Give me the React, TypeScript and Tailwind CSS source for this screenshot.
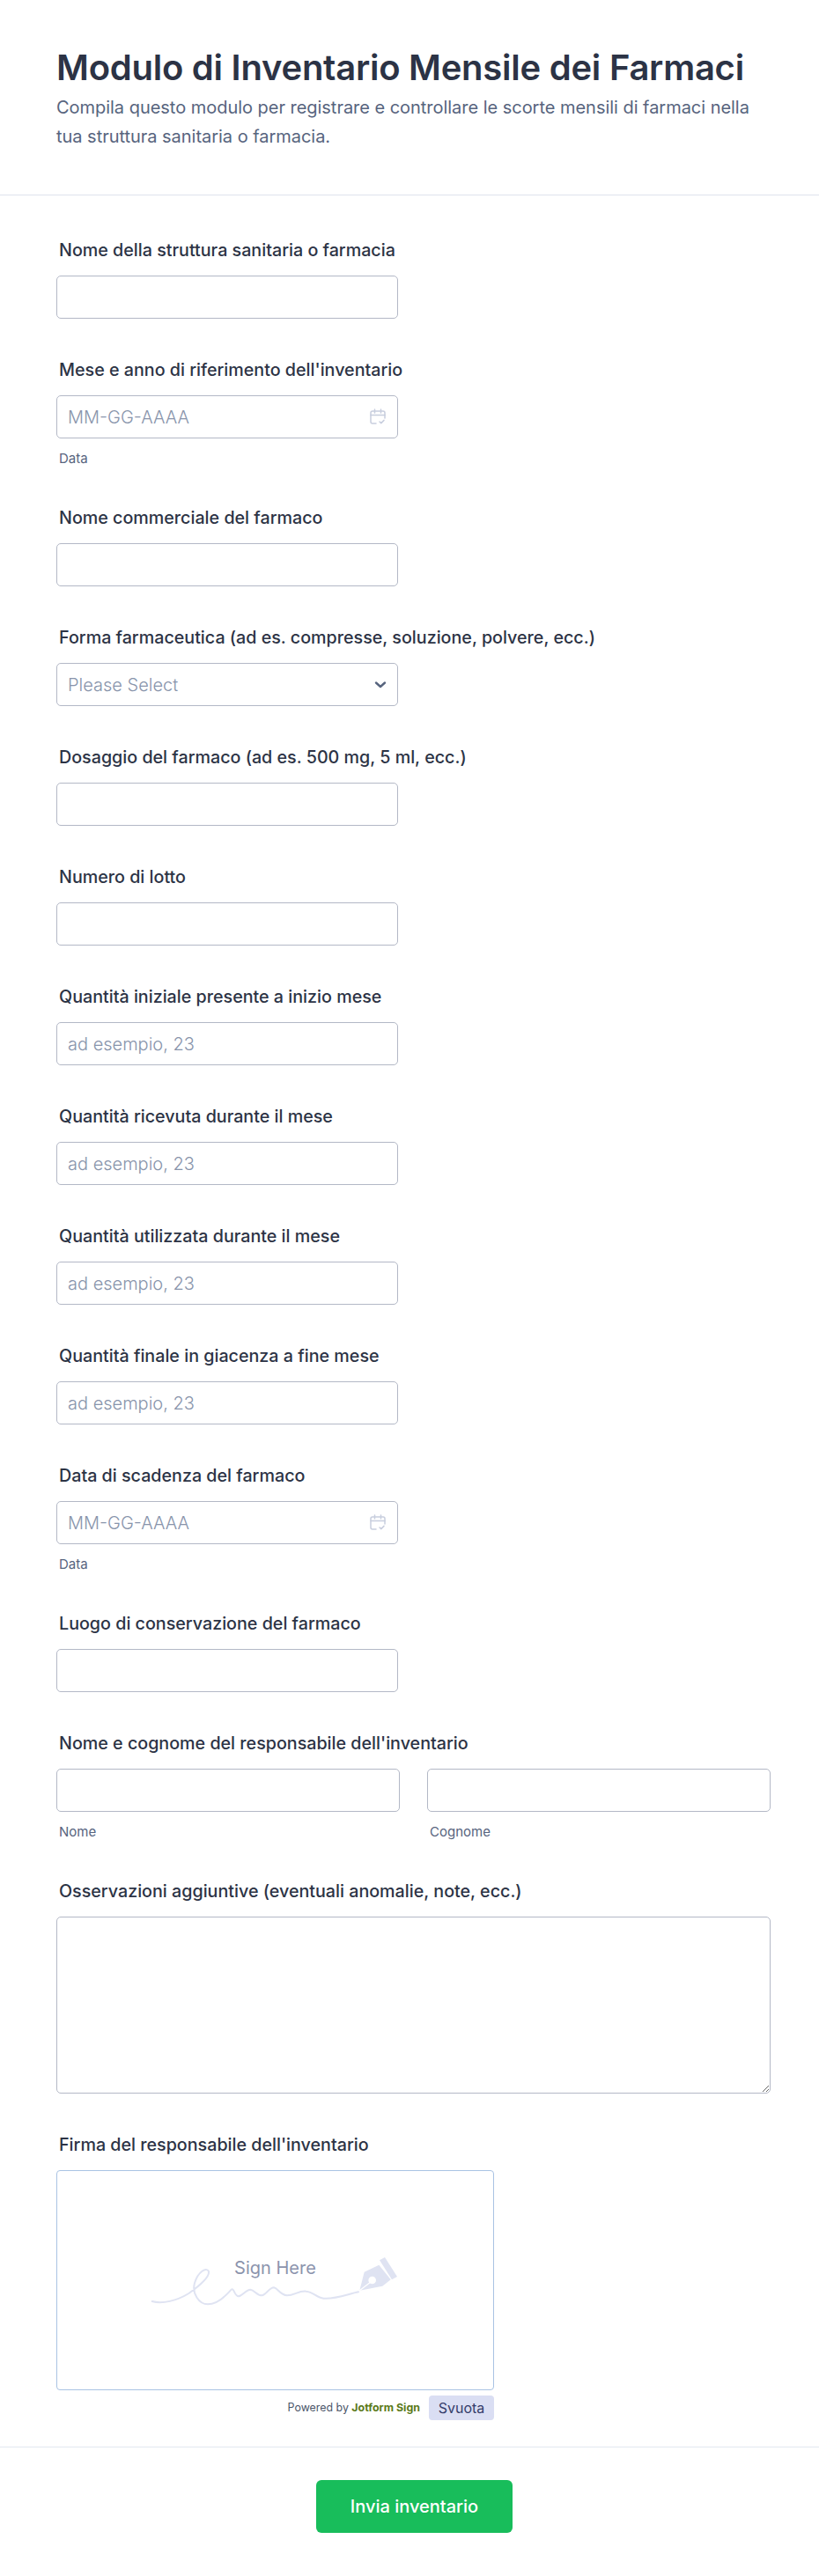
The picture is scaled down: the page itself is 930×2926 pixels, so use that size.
import React from 'react';

const inputClass =
  'block w-full h-[49px] px-3 bg-white border border-[#b3b8c6] rounded-[5px] text-[20px] font-light text-[#2c3345] placeholder:text-[#8894ab] outline-none';
const labelClass = 'block px-[3px] mb-[17px] text-[19.7px] leading-[24px] whitespace-nowrap font-[450] text-[#2c3345]';
const subLabelClass = 'block px-[3px] mt-[14px] text-[15px] leading-[18px] text-[#57647e]';

const Label: React.FC<{ children: React.ReactNode }> = ({ children }) => (
  <label className={labelClass}>{children}</label>
);

const TextField = ({ label, placeholder }: { label: string; placeholder?: string }) => (
  <div className="w-[388px]">
    <Label>{label}</Label>
    <input type="text" placeholder={placeholder} className={inputClass} />
  </div>
);

const CalendarIcon = () => (
  <svg width="18" height="18" viewBox="0 0 18 18" fill="none" stroke="#c8cede" strokeWidth="1.5" strokeLinecap="round" strokeLinejoin="round">
    <path d="M7 17H3A2 2 0 0 1 1 15V5A2 2 0 0 1 3 3h12A2 2 0 0 1 17 5V11" />
    <path d="M1 7.5h16M5.5 1v4M12.5 1v4" />
    <path d="M11 15l1.8 1.6L16 13.4" />
  </svg>
);

const DateField = ({ label }: { label: string }) => (
  <div className="w-[388px]">
    <Label>{label}</Label>
    <div className="relative">
      <input type="text" placeholder="MM-GG-AAAA" className={inputClass} />
      <span className="absolute right-[14px] top-[15px]">
        <CalendarIcon />
      </span>
    </div>
    <span className={subLabelClass}>Data</span>
  </div>
);

const SelectField = ({ label }: { label: string }) => (
  <div className="w-[388px]">
    <Label>{label}</Label>
    <div className="relative">
      <select className={`${inputClass} appearance-none text-[#8894ab]`} defaultValue="">
        <option value="">Please Select</option>
      </select>
      <svg className="absolute right-[13px] top-[20px]" width="14" height="10" viewBox="0 0 14 10" fill="none" stroke="#57647e" strokeWidth="2.4" strokeLinecap="round" strokeLinejoin="round">
        <path d="M2 2.5l5 4.5 5-4.5" />
      </svg>
    </div>
  </div>
);

// signature scribble + pen nib, coordinates taken at 3x
const SignatureArt = () => (
  <svg className="absolute left-[86px] top-[64px]" width="320" height="130" viewBox="0 0 960 390" fill="none">
    <path
      d="M65 252C100 262 150 250 190 225C225 200 262 170 258 150C250 135 222 150 210 190C200 225 225 262 255 262C285 262 315 235 335 212C345 205 345 235 360 235C375 232 385 212 400 212C415 214 420 232 440 232C455 228 465 205 480 205C495 208 500 230 525 232C550 232 565 215 590 218C615 220 625 240 650 242C690 245 730 228 768 220"
      stroke="#dfe3f2"
      strokeWidth="6"
      strokeLinecap="round"
    />
    <path d="M772 215L788 152L838 128L878 178L850 200Z" fill="#dfe3f2" />
    <path d="M840 112L858 102L900 168L882 178Z" fill="#dfe3f2" />
    <circle cx="815" cy="180" r="13" fill="#fff" />
    <path d="M772 215L810 186" stroke="#fff" strokeWidth="4" />
  </svg>
);

export default function App() {
  return (
    <div className="w-[930px] min-h-[2926px] bg-white font-['Inter',sans-serif]">
      <header className="h-[222px] px-16 pt-[51px] border-b border-[#dfe3ec]">
        <h1 className="text-[40px] leading-[52px] font-semibold tracking-[-0.25px] text-[#2c3345]">Modulo di Inventario Mensile dei Farmaci</h1>
        <p className="mt-[3px] text-[20px] leading-[33px] tracking-[-0.03px] text-[#57647e]">
          Compila questo modulo per registrare e controllare le scorte mensili di farmaci nella tua struttura sanitaria o farmacia.
        </p>
      </header>

      <form className="flex flex-col gap-[46px] px-16 pt-[50px]">
        <TextField label="Nome della struttura sanitaria o farmacia" />
        <DateField label="Mese e anno di riferimento dell'inventario" />
        <TextField label="Nome commerciale del farmaco" />
        <SelectField label="Forma farmaceutica (ad es. compresse, soluzione, polvere, ecc.)" />
        <TextField label="Dosaggio del farmaco (ad es. 500 mg, 5 ml, ecc.)" />
        <TextField label="Numero di lotto" />
        <TextField label="Quantità iniziale presente a inizio mese" placeholder="ad esempio, 23" />
        <TextField label="Quantità ricevuta durante il mese" placeholder="ad esempio, 23" />
        <TextField label="Quantità utilizzata durante il mese" placeholder="ad esempio, 23" />
        <TextField label="Quantità finale in giacenza a fine mese" placeholder="ad esempio, 23" />
        <DateField label="Data di scadenza del farmaco" />
        <TextField label="Luogo di conservazione del farmaco" />

        <div>
          <Label>Nome e cognome del responsabile dell'inventario</Label>
          <div className="grid grid-cols-2 gap-[31px] w-[811px]">
            <div>
              <input type="text" className={inputClass} />
              <span className={subLabelClass}>Nome</span>
            </div>
            <div>
              <input type="text" className={inputClass} />
              <span className={subLabelClass}>Cognome</span>
            </div>
          </div>
        </div>

        <div>
          <Label>Osservazioni aggiuntive (eventuali anomalie, note, ecc.)</Label>
          <textarea className="block w-[811px] h-[201px] bg-white border border-[#b3b8c6] rounded-[5px] outline-none" />
        </div>

        <div className="w-[497px]">
          <Label>Firma del responsabile dell'inventario</Label>
          <div className="relative h-[250px] bg-white border border-[#a9c3e3] rounded-[4px]">
            <SignatureArt />
            <span className="absolute inset-x-0 top-[98px] text-center text-[20px] leading-[24px] text-[#8c94ad]">Sign Here</span>
          </div>
          <div className="flex items-center justify-end gap-[10px] mt-[6px]">
            <span className="text-[12.4px] text-[#4a5568]">
              Powered by <b className="font-bold text-[#5b7a1a]">Jotform Sign</b>
            </span>
            <button type="button" className="h-[28px] w-[74px] rounded-[4px] text-[16px] text-[#343c6a] bg-[#dadef3] bg-[radial-gradient(#c6cbe6_0.5px,transparent_0.5px)] bg-[length:6px_6px]">
              Svuota
            </button>
          </div>
        </div>
      </form>

      <footer className="flex justify-center mt-[30px] pt-[37px] pl-[11px] border-t border-[#e3e8f0]">
        <button type="button" className="w-[223px] h-[60px] rounded-[6px] bg-[#18bd5b] text-white text-[20px] font-medium">
          Invia inventario
        </button>
      </footer>
    </div>
  );
}
